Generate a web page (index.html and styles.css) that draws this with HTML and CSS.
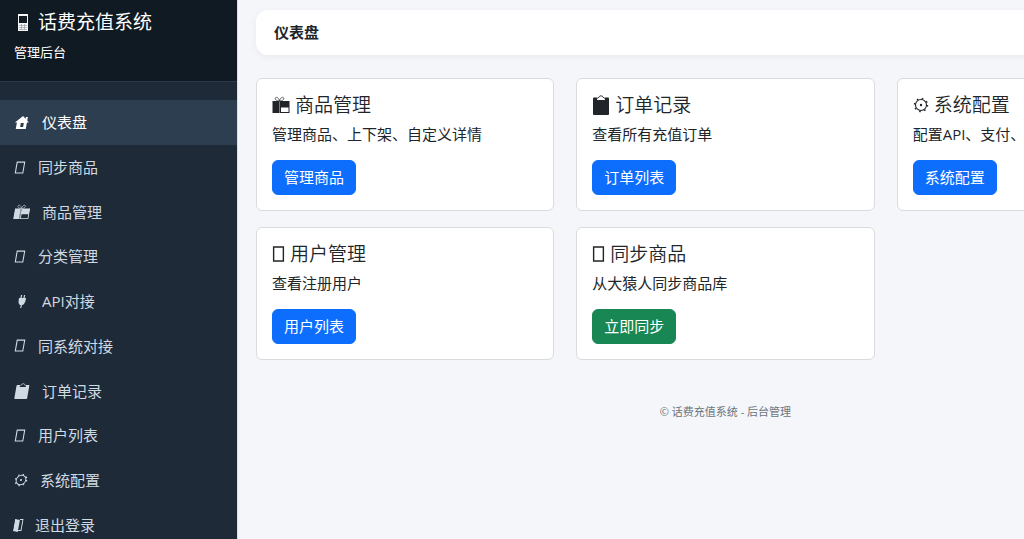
FILE: index.html
```
<!DOCTYPE html>
<html lang="zh-CN">
<head>
    <meta charset="UTF-8">
    <meta name="viewport" content="width=device-width, initial-scale=1.0">
    <title>仪表盘 - 话费充值系统</title>
    <link rel="stylesheet" href="styles.css">
</head>
<body>

    <!-- Shared icons -->
    <svg class="sprite" aria-hidden="true">
        <symbol id="phone" viewBox="0 0 19 19">
            <path fill="#f4f6f8" fill-rule="evenodd" d="M4 1h10v17H4zM5 3v7h8V3z"/>
            <path fill="#101a23" d="M5 3h8v7H5z"/>
            <path stroke="#8c939a" d="M5 12.500h8M5 14.500h8M5 16.500h8M7.500 11v6M10.500 11v6" stroke-width=".6"/>
        </symbol>
        <symbol id="home" viewBox="0 0 16 16">
            <path fill="currentColor" fill-rule="evenodd" d="M8 2L15 8.500h-2V15H3V8.500H1zM7 9v4h3V9z"/>
            <path fill="currentColor" d="M11 3h2v4h-2z"/>
        </symbol>
        <symbol id="gift" viewBox="0 0 18 18">
            <path fill="none" stroke="currentColor" stroke-width=".7" d="M7.500 5C4 5 2.500 3 3.500 1.800S7 2 7.500 5C8 2 10.500 .6 11.500 1.800S11 5 7.500 5z"/>
            <path fill="currentColor" fill-rule="evenodd" d="M.5 5h6.500v12H.5zM8 5h9.500v12H8zM9 11.500v4.500h7.500v-4.500z"/>
            <path fill="currentColor" opacity=".6" d="M7 5h1v12H7z"/>
        </symbol>
        <symbol id="plug" viewBox="0 0 16 16">
            <path fill="none" stroke="currentColor" stroke-width="1.200" d="M6.500 2v4M9.500 2v4M8 10v5"/>
            <path fill="currentColor" d="M4.500 5h7v2c0 3-1.200 4.500-2.300 5H6.800C5.700 11.500 4.500 10 4.500 7z"/>
        </symbol>
        <symbol id="clipboard" viewBox="0 0 18 20">
            <path fill="currentColor" fill-rule="evenodd" d="M2 2.500h14q1 0 1 1V19q0 1-1 1H2q-1 0-1-1V3.500q0-1 1-1zM5.500 2.500L5 5h8l-.5-2.500z"/>
            <path fill="none" stroke="currentColor" stroke-width=".9" d="M5.500 3.500q.5-1 1.500-1.200q.3-1.500 2-1.500t2 1.500q1 .2 1.500 1.200"/>
        </symbol>
        <symbol id="gear" viewBox="0 0 16 16">
            <circle cx="8" cy="8" r="5.500" fill="none" stroke="currentColor" stroke-width="1.100"/>
            <circle cx="8" cy="8" r="6.500" fill="none" stroke="currentColor" stroke-width="1.400" stroke-dasharray="1.600 3.505"/>
            <circle cx="8" cy="8" r="1.200" fill="currentColor"/>
        </symbol>
        <symbol id="door" viewBox="0 0 9 16">
            <path fill="currentColor" d="M0 2l5 1v12l-5-1z"/>
            <path fill="none" stroke="currentColor" d="M5 2.500h3v11H5"/>
        </symbol>
        <symbol id="box" viewBox="0 0 12 18">
            <path fill="none" stroke="currentColor" stroke-width="1.300" d="M1.500 2.500h9v13h-9z"/>
        </symbol>
    </svg>

    <div class="layout">
        <aside class="sidebar">
            <div class="brand">
                <h1><svg class="icon"><use href="#phone"/></svg>话费充值系统</h1>
                <small>管理后台</small>
            </div>
            <nav class="menu">
                <a href="#" class="active"><svg class="icon"><use href="#home"/></svg>仪表盘</a>
                <a href="#"><svg class="icon narrow"><use href="#box"/></svg>同步商品</a>
                <a href="#"><svg class="icon"><use href="#gift"/></svg>商品管理</a>
                <a href="#"><svg class="icon narrow"><use href="#box"/></svg>分类管理</a>
                <a href="#"><svg class="icon"><use href="#plug"/></svg>API对接</a>
                <a href="#"><svg class="icon narrow"><use href="#box"/></svg>同系统对接</a>
                <a href="#"><svg class="icon"><use href="#clipboard"/></svg>订单记录</a>
                <a href="#"><svg class="icon narrow"><use href="#box"/></svg>用户列表</a>
                <a href="#"><svg class="icon gear"><use href="#gear"/></svg>系统配置</a>
                <a href="#"><svg class="icon door"><use href="#door"/></svg>退出登录</a>
            </nav>
        </aside>

        <main class="content">
            <header class="topbar">仪表盘</header>

            <div class="cards">
                <section class="card">
                    <h2><svg class="icon"><use href="#gift"/></svg>商品管理</h2>
                    <p>管理商品、上下架、自定义详情</p>
                    <a href="#" class="btn">管理商品</a>
                </section>
                <section class="card">
                    <h2><svg class="icon"><use href="#clipboard"/></svg>订单记录</h2>
                    <p>查看所有充值订单</p>
                    <a href="#" class="btn">订单列表</a>
                </section>
                <section class="card">
                    <h2><svg class="icon gear"><use href="#gear"/></svg>系统配置</h2>
                    <p>配置API、支付、</p>
                    <a href="#" class="btn">系统配置</a>
                </section>
                <section class="card">
                    <h2><svg class="icon narrow"><use href="#box"/></svg>用户管理</h2>
                    <p>查看注册用户</p>
                    <a href="#" class="btn">用户列表</a>
                </section>
                <section class="card">
                    <h2><svg class="icon narrow"><use href="#box"/></svg>同步商品</h2>
                    <p>从大猿人同步商品库</p>
                    <a href="#" class="btn btn-success">立即同步</a>
                </section>
            </div>

            <footer>© 话费充值系统 - 后台管理</footer>
        </main>
    </div>

</body>
</html>
```
FILE: styles.css
```
* {
    box-sizing: border-box;
}

body {
    margin: 0;
    font-family: "Open Sans", "Noto Sans CJK SC", sans-serif;
    font-size: 15px;
    line-height: 22px;
    color: #212529;
    background: #f4f6fa;
    overflow: hidden;
}

a {
    text-decoration: none;
}

.sprite {
    display: none;
}

.icon {
    flex: none;
    overflow: visible;
}

.layout {
    display: flex;
    min-height: 100vh;
}

/* Sidebar */
.sidebar {
    flex: 0 0 237px;
    background: #1f2a38;
    color: #fff;
}

.brand {
    padding: 10px 14px 19px;
    background: #101a23;
    border-bottom: 1px solid #2c3b4c;
}

.brand h1 {
    display: flex;
    align-items: center;
    gap: 5px;
    margin: 0 0 8px;
    font-size: 19px;
    font-weight: 400;
    line-height: 24px;
}

.brand .icon {
    width: 19px;
    height: 19px;
}

.brand small {
    display: block;
    font-size: 13px;
    line-height: 20px;
}

.menu {
    display: grid;
    grid-auto-rows: 1fr;
    height: 465px;
    padding-top: 18px;
}

.menu a {
    display: flex;
    align-items: center;
    gap: 12px;
    padding: 0 14px;
    color: #cfdae3;
}

.menu a:hover,
.menu a.active {
    background: #2c3e50;
    color: #fff;
}

.menu .icon {
    width: 16px;
    height: 16px;
    transform: skewX(-10deg);
}

.menu .narrow {
    width: 12px;
    height: 15px;
}

.menu .gear {
    width: 14px;
}

.menu .door {
    width: 9px;
}

/* Content */
.content {
    flex: 1 0 auto;
    min-width: 976px;
    padding: 10px 18px;
    border-left: 1px solid #dcdfe5;
}

.topbar {
    margin-bottom: 23px;
    padding: 11px 18px 12px;
    font-weight: 700;
    background: #fff;
    border-radius: 12px;
    box-shadow: 0 2px 8px rgba(0, 0, 0, 0.05);
}

.cards {
    display: grid;
    grid-template-columns: repeat(3, 1fr);
    gap: 16px 22px;
}

.card {
    padding: 15px;
    background: #fff;
    border: 1px solid #d9dbde;
    border-radius: 6px;
}

.card h2 {
    display: flex;
    align-items: center;
    gap: 5px;
    margin: 0 0 7px;
    font-size: 19px;
    font-weight: 350;
    line-height: 22px;
}

.card .icon {
    width: 18px;
    height: 20px;
}

.card .narrow {
    width: 13px;
}

.card .gear {
    width: 16px;
}

.card p {
    margin: 0 0 15px;
}

.btn {
    display: inline-block;
    padding: 6px 11px;
    line-height: 21px;
    color: #fff;
    background: #0d6efd;
    border: 1px solid #0d6efd;
    border-radius: 6px;
    vertical-align: top;
}

.btn-success {
    background: #198754;
    border-color: #198754;
}

footer {
    margin-top: 44px;
    font-size: 11px;
    line-height: 16px;
    text-align: center;
    color: #6c757d;
}
```
